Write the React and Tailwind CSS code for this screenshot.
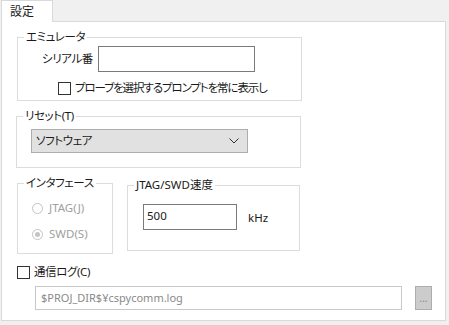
import React from "react";

const J = "tracking-[-0.4px]";

const Group = ({ label, className, children }) => (
  <fieldset className={`border border-[#dcdcdc] p-0 m-0 ${className}`}>
    <legend className="ml-[6px] px-[2px] leading-[16px]">{label}</legend>
    {children}
  </fieldset>
);

const Radio = ({ label, checked }) => (
  <div className="flex items-center h-[16px]">
    <span className="w-[11px] h-[11px] rounded-full border border-[#c4c4c4] bg-white flex items-center justify-center">
      {checked && <span className="w-[5px] h-[5px] rounded-full bg-[#c4c4c4]" />}
    </span>
    <span className="ml-[6px] text-[#a0a0a0]">{label}</span>
  </div>
);

export default function App() {
  return (
    <div
      className="w-[449px] h-[325px] bg-[#f0f0f0] text-[11.5px] text-[#1a1a1a] [font-feature-settings:'palt']"
      style={{ fontFamily: '"Noto Sans", "Noto Sans CJK JP", sans-serif' }}
    >
      {/* Tab header */}
      <div className="flex h-[21px]">
        <div className="ml-[1px] w-[52px] h-[22px] bg-white border-l border-t border-r border-[#d9d9d9] relative z-10 pl-[8px] leading-[21px] text-[12px]">
          設定
        </div>
      </div>

      {/* Panel */}
      <div className="ml-[1px] w-[445px] h-[300px] bg-white border border-[#d9d9d9] flex flex-col">
        <Group label={<span className={J}>エミュレータ</span>} className="ml-[15px] mt-[7px] w-[285px] h-[72px]">
          <div className="flex items-center mt-[1px]">
            <span className={`ml-[24px] w-[56px] ${J}`}>シリアル番</span>
            <div className="w-[157px] h-[26px] border border-[#7a7a7a] bg-white" />
          </div>
          <div className="flex items-center h-[16px] mt-[8px] ml-[40px]">
            <span className="w-[13px] h-[13px] border border-[#333333] bg-white" />
            <span className="ml-[4px] tracking-[-1.1px]">プローブを選択するプロンプトを常に表示し</span>
          </div>
        </Group>

        <Group label={<span className={J}>リセット(T)</span>} className="ml-[14px] mt-[7px] w-[285px] h-[60px]">
          <div className="ml-[14px] mt-[5px] w-[217px] h-[24px] bg-[#e1e1e1] border border-[#adadad] flex items-center justify-between pl-[4px] pr-[8px]">
            <span className={J}>ソフトウェア</span>
            <svg width="10" height="6" viewBox="0 0 10 6" fill="none">
              <path d="M0.5 0.5 L5 5 L9.5 0.5" stroke="#333" strokeWidth="1" />
            </svg>
          </div>
        </Group>

        <div className="flex items-start mt-[7px] ml-[15px]">
          <Group label={<span className={J}>インタフェース</span>} className="w-[96px] h-[79px]">
            <div className="ml-[14px] mt-[9px] flex flex-col gap-[10px]">
              <Radio label="JTAG(J)" />
              <Radio label="SWD(S)" checked />
            </div>
          </Group>
          <Group label="JTAG/SWD速度" className="ml-[14px] mt-[2px] w-[173px] h-[74px]">
            <div className="flex items-center mt-[11px] ml-[15px]">
              <div className="w-[94px] h-[26px] border border-[#7a7a7a] bg-white pl-[3px] leading-[22px]">500</div>
              <span className="ml-[11px] mt-[2px]">kHz</span>
            </div>
          </Group>
        </div>

        <div className="flex items-center h-[16px] mt-[10px] ml-[15px]">
          <span className="w-[13px] h-[13px] border border-[#333333] bg-white" />
          <span className={`ml-[4px] ${J}`}>通信ログ(C)</span>
        </div>

        <div className="flex items-center mt-[6px] ml-[33px]">
          <div className="w-[367px] h-[24px] border border-[#c8c8c8] bg-white pl-[5px] leading-[22px] text-[#8a8a8a] text-[11px]">
            $PROJ_DIR$¥cspycomm.log
          </div>
          <div className="ml-[13px] w-[17px] h-[24px] bg-[#cccccc] border border-[#adadad] flex items-center justify-center text-[#8a8a8a] text-[10px] leading-none">
            ...
          </div>
        </div>
      </div>
    </div>
  );
}
